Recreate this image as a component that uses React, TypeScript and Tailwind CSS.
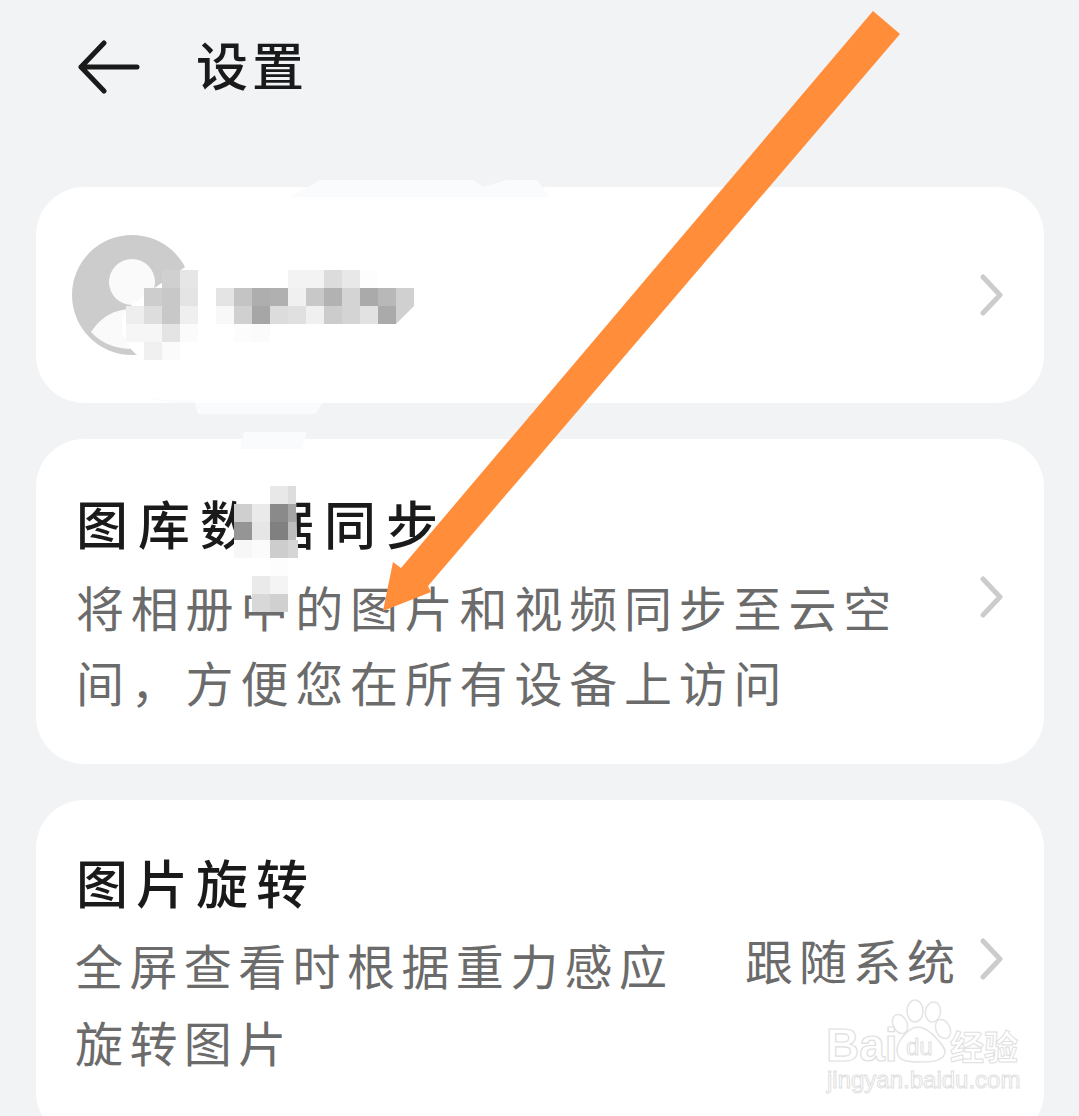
import React from "react";

const FONT = "font-['Noto_Sans_CJK_SC','Noto_Sans',sans-serif]";

type Cell = [number, number, string];
const cells: Cell[] = [
  // name mosaic
  [288, 270, "#f3f3f3"], [306, 270, "#f3f3f3"], [324, 270, "#dcdcdc"], [342, 270, "#e8e8e8"], [360, 270, "#fdfdfd"],
  [216, 288, "#e4e4e4"], [234, 288, "#c4c4c4"], [252, 288, "#aeaeae"], [270, 288, "#b0b0b0"], [288, 288, "#f0f0f0"], [306, 288, "#c8c8c8"], [324, 288, "#b2b2b2"], [342, 288, "#d4d4d4"], [360, 288, "#aaaaaa"], [378, 288, "#b8b8b8"], [396, 288, "#d0d0d0"],
  [216, 306, "#f8f8f8"], [234, 306, "#d0d0d0"], [252, 306, "#a6a6a6"], [270, 306, "#dcdcdc"], [288, 306, "#e0e0e0"], [306, 306, "#f0f0f0"], [324, 306, "#cccccc"], [342, 306, "#d4d4d4"], [360, 306, "#e2e2e2"], [378, 306, "#aaaaaa"],
  [234, 324, "#fcfcfc"], [252, 324, "#fbfbfb"],
  // avatar mosaic
  [180, 270, "#e6e6e6"], [162, 270, "#d0d0d0"],
  [144, 288, "#cdcdcd"], [162, 288, "#c8c8c8"], [180, 288, "#e4e4e4"],
  [126, 306, "#eeeeee"], [144, 306, "#dddddd"], [162, 306, "#c8c8c8"], [180, 306, "#efefef"],
  [126, 324, "#f6f6f6"], [144, 324, "#f6f6f6"], [162, 324, "#e4e4e4"], [180, 324, "#fbfbfb"],
  [144, 342, "#f0f0f0"], [162, 342, "#fbfbfb"],
  // title mosaic
  [270, 486, "#e8e8e8"], [234, 504, "#cfcfcf"], [252, 504, "#eaeaea"], [270, 504, "#8a8a8a"],
  [234, 522, "#959595"], [252, 522, "#e6e6e6"], [270, 522, "#808080"],
  [234, 540, "#f7f7f7"], [252, 540, "#fbfbfb"], [270, 540, "#cdcdcd"],
  [270, 558, "#fdfdfd"], [252, 576, "#eaeaea"], [270, 576, "#f4f4f4"], [252, 594, "#d8d8d8"], [270, 594, "#d0d0d0"],
];

function Chevron({ className = "" }: { className?: string }) {
  return (
    <svg width="24" height="42" viewBox="0 0 24 42" className={`shrink-0 ${className}`}>
      <polyline points="3,3 20,21 3,39" fill="none" stroke="#cccccc" strokeWidth="5" strokeLinecap="round" strokeLinejoin="round" />
    </svg>
  );
}

function Overlay() {
  return (
    <svg className="absolute inset-0 pointer-events-none" width="1079" height="1116" viewBox="0 0 1079 1116">
      {/* smudges */}
      <polygon points="320,180 473,180 483,187 507,180 537,180 550,197 320,197 290,197" fill="#fafbfc" />
      <polygon points="195,403 323,403 315,414 198,414" fill="#fafbfc" />
      <polygon points="150,398 195,398 195,403 175,403" fill="#fafbfc" />
      <polygon points="244,432 307,432 302,449 240,449" fill="#fafbfc" />
      <path d="M122 318 C 126 305 150 292 198 258 L430 270 L414 320 L330 375 L320 403 L160 400 L145 360 C 128 352 120 335 122 318 Z" fill="#ffffff" />
      <path d="M243 449 L302 449 L296 490 L297 550 L305 575 L300 595 L275 606 L252 600 L238 545 L236 490 Z" fill="#ffffff" />
      <polygon points="414,288 432,288 414,306 396,324 396,306" fill="#ffffff" />
      {/* mosaic */}
      {cells.map(([x, y, c], i) => (
        <rect key={i} x={x} y={y} width="18" height="18" fill={c} />
      ))}
      <rect x="288" y="486" width="8" height="18" fill="#dddddd" />
      <rect x="288" y="504" width="8" height="18" fill="#a5a5a5" />
      <rect x="288" y="522" width="8" height="18" fill="#bdbdbd" />
      <rect x="288" y="540" width="10" height="18" fill="#d5d5d5" />
      <polygon points="396,288 414,288 414,306 396,324" fill="#d0d0d0" />
      {/* arrow */}
      <polygon points="873,11 900,34 428,586 431,592 383,611 393,562 401,568" fill="#ff8d3a" />
      {/* paw */}
      <g fill="#ffffff" stroke="#e4e4e4" strokeWidth="1.5">
        <ellipse cx="915" cy="1011" rx="8" ry="11" />
        <ellipse cx="933" cy="1012" rx="7.5" ry="10" transform="rotate(8 933 1012)" />
        <ellipse cx="900" cy="1024" rx="7" ry="10" transform="rotate(-25 900 1024)" />
        <ellipse cx="943" cy="1029" rx="7" ry="10" transform="rotate(-25 943 1029)" />
        <path d="M918 1027 C 930 1027 945 1048 945 1051 C 945 1060 935 1062 920 1062 C 905 1062 897 1060 897 1050 C 897 1042 908 1027 918 1027 Z" />
      </g>
    </svg>
  );
}

export default function App() {
  return (
    <div className={`relative w-[1079px] h-[1116px] overflow-hidden bg-[#f1f3f5] ${FONT}`}>
      <header className="h-[187px] pl-[78px] pt-[34px] flex items-start">
        <div className="flex items-center h-[66px]">
          <svg width="62" height="54" viewBox="0 0 62 54" className="shrink-0">
            <path d="M26 3 L3 27 L26 51 M3 27 L59 27" fill="none" stroke="#1a1a1a" strokeWidth="5" strokeLinecap="round" strokeLinejoin="round" />
          </svg>
          <h1 className="ml-[56px] -mt-[6px] text-[52px] leading-[66px] tracking-[4px] font-medium text-[#1a1a1a]">设置</h1>
        </div>
      </header>

      <main className="pl-9 pr-[35px] flex flex-col gap-9">
        <section className="h-[216px] rounded-[48px] bg-white pl-9 pr-[40px] flex items-center justify-between">
          <svg width="120" height="120" viewBox="0 0 120 120" className="shrink-0">
            <circle cx="60" cy="60" r="60" fill="#cccccc" />
            <circle cx="60" cy="47" r="23" fill="#fafafa" />
            <path d="M19 97 C 30 80 45 74 60 74 C 78 74 92 84 101 97 C 90 109 75 114 60 114 C 45 114 30 109 19 97 Z" fill="#fafafa" />
          </svg>
          <Chevron />
        </section>

        <section className="h-[325px] rounded-[48px] bg-white pl-[40px] pr-[40px] flex items-center justify-between">
          <div className="w-[830px] pt-[4px]">
            <div className="text-[52px] leading-[66px] tracking-[10px] font-medium text-[#1a1a1a] mt-[2px]">图库数据同步</div>
            <div className="mt-[13px] text-[48px] leading-[75px] tracking-[6.8px] text-[#6b6b6b]">将相册中的图片和视频同步至云空间，方便您在所有设备上访问</div>
          </div>
          <Chevron className="-mt-[10px]" />
        </section>

        <section className="h-[340px] rounded-[48px] bg-white pl-[40px] pr-[40px] pt-[50px] flex items-start justify-between">
          <div className="w-[650px]">
            <div className="text-[52px] leading-[66px] tracking-[8px] font-medium text-[#1a1a1a] -mt-[1px]">图片旋转</div>
            <div className="mt-[11px] -ml-[1px] text-[48px] leading-[77px] tracking-[6.4px] text-[#6b6b6b]">全屏查看时根据重力感应旋转图片</div>
          </div>
          <div className="flex items-center mt-[76px]">
            <span className="text-[48px] leading-[66px] tracking-[6px] text-[#6b6b6b] mr-[19px]">跟随系统</span>
            <Chevron />
          </div>
        </section>
      </main>

      <Overlay />

      <div className="absolute left-[826px] top-[1020px] text-[46px] leading-[50px] font-['Liberation_Sans',sans-serif] font-bold text-white [-webkit-text-stroke:1.2px_#dfdfdf]">Bai</div>
      <div className="absolute left-[906px] top-[1034px] text-[24px] leading-[26px] font-['Liberation_Sans',sans-serif] text-white [-webkit-text-stroke:1px_#dfdfdf]">du</div>
      <div className="absolute left-[950px] top-[1024px] text-[34px] leading-[44px] font-bold text-white [-webkit-text-stroke:1px_#dfdfdf]">经验</div>
      <div className="absolute left-[827px] top-[1066px] text-[24px] leading-[28px] font-['Liberation_Sans',sans-serif] text-white [-webkit-text-stroke:1px_#dfdfdf]">jingyan.baidu.com</div>
    </div>
  );
}
